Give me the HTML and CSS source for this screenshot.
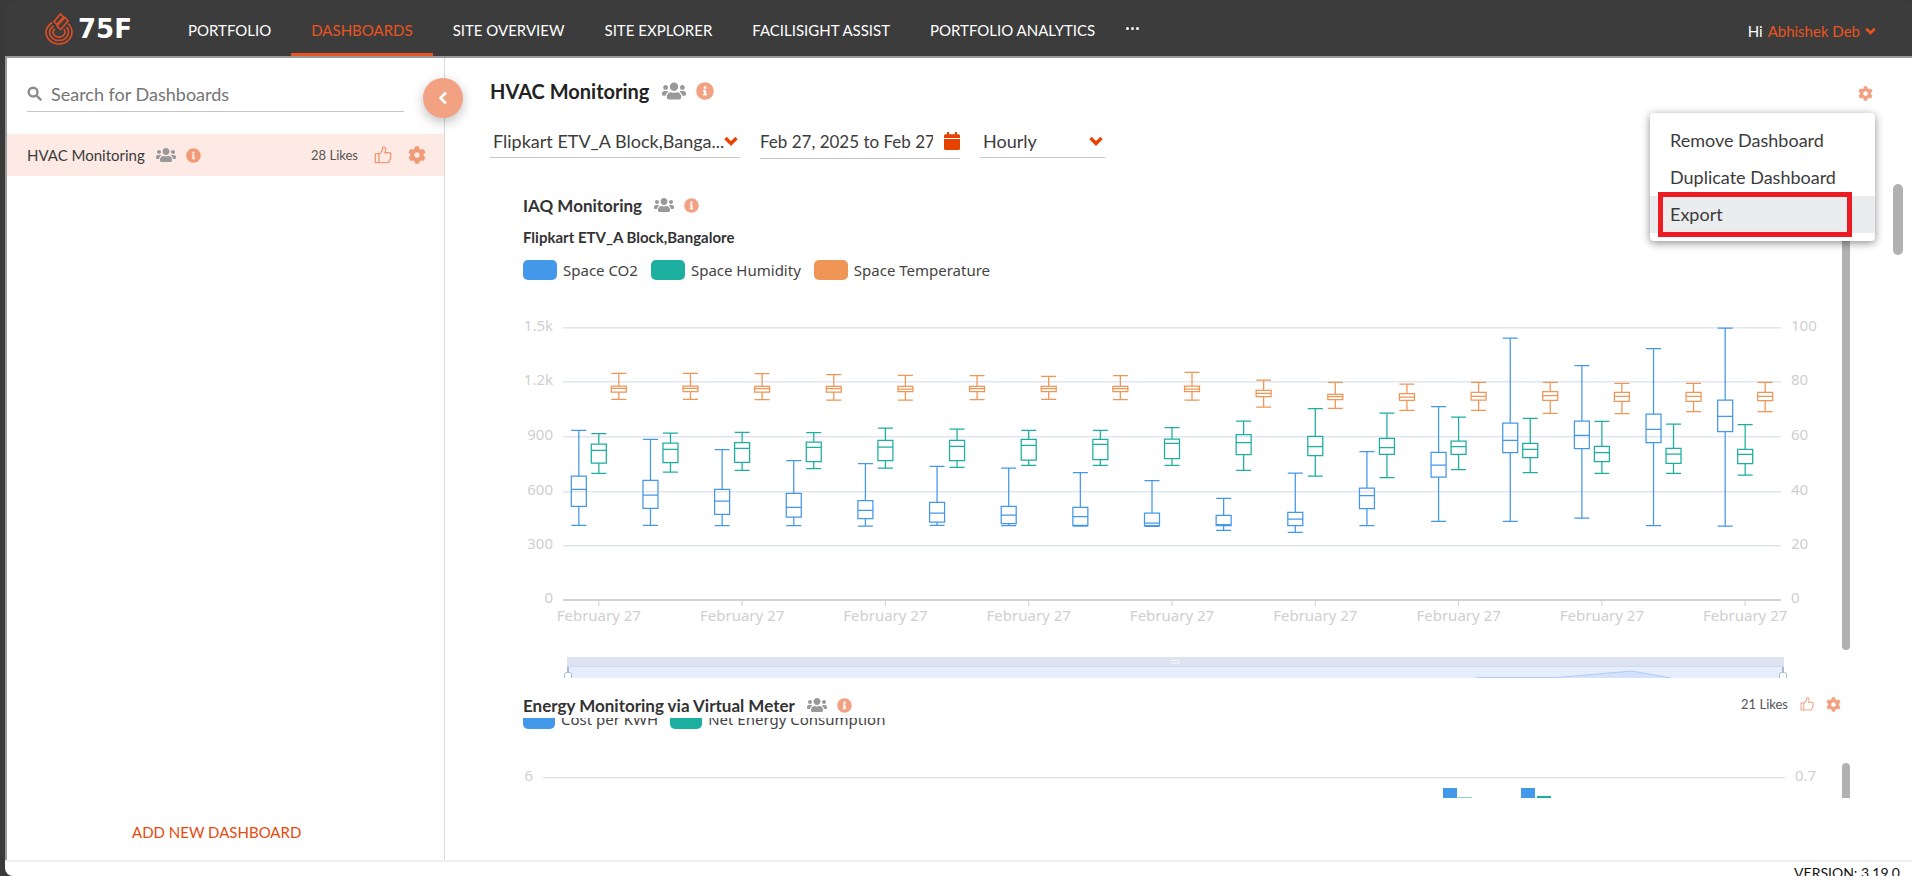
FILE: index.html
```html
<!DOCTYPE html>
<html lang="en">
<head>
<meta charset="utf-8">
<title>75F Dashboards</title>
<link rel="stylesheet" href="styles.css">
</head>
<body>
<svg class="defs" aria-hidden="true">
  <symbol id="i-users" viewBox="0 0 640 512"><path d="M96 224c35.300 0 64-28.700 64-64s-28.700-64-64-64-64 28.700-64 64 28.700 64 64 64zm448 0c35.300 0 64-28.700 64-64s-28.700-64-64-64-64 28.700-64 64 28.700 64 64 64zm32 32h-64c-17.600 0-33.500 7.100-45.100 18.600 40.300 22.100 68.900 62 75.100 109.400h66c17.700 0 32-14.300 32-32v-32c0-35.300-28.700-64-64-64zm-256 0c61.900 0 112-50.100 112-112S381.900 32 320 32 208 82.100 208 144s50.100 112 112 112zm76.800 32h-8.300c-20.800 10-43.900 16-68.500 16s-47.600-6-68.500-16h-8.300C179.600 288 128 339.600 128 403.200V432c0 26.500 21.500 48 48 48h288c26.500 0 48-21.500 48-48v-28.800c0-63.600-51.600-115.200-115.200-115.200zm-223.700-13.400C161.500 263.100 145.600 256 128 256H64c-35.300 0-64 28.700-64 64v32c0 17.700 14.300 32 32 32h65.900c6.300-47.400 34.900-87.300 75.200-109.400z"/></symbol>
  <symbol id="i-info" viewBox="0 0 512 512"><path d="M256 8C119 8 8 119 8 256s111 248 248 248 248-111 248-248S393 8 256 8zm0 110c23.200 0 42 18.800 42 42s-18.800 42-42 42-42-18.800-42-42 18.800-42 42-42zm56 254c0 6.600-5.400 12-12 12h-88c-6.600 0-12-5.400-12-12v-24c0-6.600 5.400-12 12-12h12v-64h-12c-6.600 0-12-5.400-12-12v-24c0-6.600 5.400-12 12-12h64c6.600 0 12 5.400 12 12v100h12c6.600 0 12 5.400 12 12z"/></symbol>
  <symbol id="i-gear" viewBox="0 0 512 512"><path d="M487.400 315.700l-42.600-24.600c4.300-23.200 4.300-47 0-70.200l42.600-24.600c4.900-2.800 7.100-8.600 5.500-14-11.100-35.600-30-67.800-54.700-94.600-3.800-4.100-10-5.100-14.800-2.300L380.800 110c-17.900-15.400-38.500-27.300-60.800-35.100V25.800c0-5.600-3.900-10.500-9.400-11.700-36.700-8.200-74.300-7.800-109.200 0-5.500 1.200-9.400 6.100-9.400 11.700V75c-22.200 7.900-42.800 19.800-60.800 35.100L88.700 85.500c-4.900-2.800-11-1.900-14.800 2.300-24.700 26.700-43.600 58.900-54.700 94.600-1.700 5.400.6 11.200 5.500 14L67.300 221c-4.300 23.200-4.300 47 0 70.200l-42.600 24.600c-4.900 2.800-7.100 8.600-5.500 14 11.100 35.600 30 67.800 54.700 94.600 3.800 4.100 10 5.100 14.800 2.300l42.600-24.600c17.900 15.400 38.500 27.300 60.800 35.100v49.200c0 5.600 3.900 10.500 9.400 11.700 36.700 8.200 74.300 7.800 109.200 0 5.500-1.200 9.400-6.100 9.400-11.700v-49.200c22.200-7.900 42.800-19.800 60.800-35.100l42.600 24.600c4.900 2.800 11 1.900 14.800-2.300 24.700-26.700 43.600-58.900 54.700-94.600 1.500-5.500-.7-11.300-5.600-14.100zM256 336c-44.100 0-80-35.900-80-80s35.900-80 80-80 80 35.900 80 80-35.900 80-80 80z"/></symbol>
  <symbol id="i-thumb" viewBox="0 0 20 20"><path d="M1.500 8.500h4v10h-4zM5.500 9c2.500-1.500 4-3.500 4.200-7.300.1-1 3.300-.9 3.300 2 0 1.500-.5 2.500-1 3.800h5c2 0 2 2 1.300 3 .8 1 .5 2.300-.3 2.800.4 1 .1 2.100-.8 2.600 0 1.700-.8 2.600-2.400 2.600H5.500z" fill="none" stroke="currentColor" stroke-width="1.500" stroke-linejoin="round"/></symbol>
  <symbol id="i-search" viewBox="0 0 16 16"><path d="M6.500 1.800a4.700 4.700 0 1 0 0 9.400 4.700 4.700 0 0 0 0-9.400zM10 10l4.500 4.500" fill="none" stroke="currentColor" stroke-width="2.600" stroke-linecap="round"/></symbol>
  <symbol id="i-down" viewBox="0 0 14 10"><path d="M1.500 2L7 7.500 12.500 2" fill="none" stroke="currentColor" stroke-width="3.400"/></symbol>
  <symbol id="i-left" viewBox="0 0 10 14"><path d="M8 1.500L2.500 7 8 12.500" fill="none" stroke="currentColor" stroke-width="2.600"/></symbol>
  <symbol id="i-cal" viewBox="0 0 16 18"><path d="M0 7h16v9.500a1.500 1.500 0 0 1-1.500 1.500h-13A1.500 1.500 0 0 1 0 16.500zM0 6V3.700a1.500 1.500 0 0 1 1.500-1.500H3V.5a.5.500 0 0 1 .5-.5h1.200a.5.500 0 0 1 .5.500v1.700h5.600V.5a.5.500 0 0 1 .5-.5h1.200a.5.500 0 0 1 .5.500v1.700h1.500A1.500 1.500 0 0 1 16 3.700V6z"/></symbol>
  <symbol id="i-drop" viewBox="0 0 28 33"><g fill="none" stroke="currentColor" stroke-width="1.700"><path d="M7 10.500C3.500 13.500 1 16 1 20a13 12 0 0 0 26 0c0-3.500-1.500-6-4-8.500M8.500 14C6 16 4.500 17.500 4.500 20a9.500 8.500 0 0 0 19 0c0-2-.8-3.800-2-5M10 17c-1.400 1-2 2-2 3a6 5.200 0 0 0 12 0c0-1-.4-2-1.200-3"/><path d="M9 9.500L15.500 2l3 3-6.500 7.500zM12 14l8-8.500L23 9l-7.500 8.500L12 14z"/></g></symbol>
</svg>

<div class="app">
  <header class="topbar">
    <a class="logo" href="#" aria-label="75F"><svg class="drop"><use href="#i-drop"/></svg><span class="logo-name">75F</span></a>
    <nav class="nav">
      <a href="#">PORTFOLIO</a>
      <a href="#" class="active">DASHBOARDS</a>
      <a href="#">SITE OVERVIEW</a>
      <a href="#">SITE EXPLORER</a>
      <a href="#">FACILISIGHT ASSIST</a>
      <a href="#">PORTFOLIO ANALYTICS</a>
    </nav>
    <button class="more" aria-label="More"><i></i><i></i><i></i></button>
    <div class="greeting">Hi <button class="user">Abhishek Deb <svg class="user-arrow"><use href="#i-down"/></svg></button></div>
  </header>

  <div class="body">
    <aside class="sidebar">
      <label class="search"><svg><use href="#i-search"/></svg><input type="text" placeholder="Search for Dashboards" aria-label="Search for Dashboards"></label>
      <button class="collapse" aria-label="Collapse"><svg><use href="#i-left"/></svg></button>
      <div class="dash-row">
        <a href="#" class="dash-name">HVAC Monitoring</a>
        <svg class="users"><use href="#i-users"/></svg>
        <svg class="info"><use href="#i-info"/></svg>
        <span class="likes">28 Likes</span>
        <button class="icon" aria-label="Like"><svg class="thumb"><use href="#i-thumb"/></svg></button>
        <button class="icon" aria-label="Settings"><svg class="gear"><use href="#i-gear"/></svg></button>
      </div>
      <button class="add">ADD NEW DASHBOARD</button>
    </aside>

    <main class="main">
      <div class="title-row">
        <h1>HVAC Monitoring</h1>
        <svg class="users large"><use href="#i-users"/></svg>
        <svg class="info large"><use href="#i-info"/></svg>
        <div class="settings">
          <button class="icon" aria-label="Dashboard settings"><svg class="gear small"><use href="#i-gear"/></svg></button>
          <div class="menu">
            <button>Remove Dashboard</button>
            <button>Duplicate Dashboard</button>
            <button class="hover">Export<span class="mark"></span></button>
          </div>
        </div>
      </div>

      <div class="filters">
        <div class="field site"><select aria-label="Site"><option>Flipkart ETV_A Block,Banga...</option></select><svg class="arrow"><use href="#i-down"/></svg></div>
        <div class="field date"><input type="text" aria-label="Date range" value="Feb 27, 2025 to Feb 27, 2025"><svg class="cal"><use href="#i-cal"/></svg></div>
        <div class="field interval"><select aria-label="Interval"><option>Hourly</option></select><svg class="arrow"><use href="#i-down"/></svg></div>
      </div>

      <div class="scroll">
        <div class="widgets">
          <section class="widget">
            <div class="widget-content">
              <div class="widget-head"><h2>IAQ Monitoring</h2><svg class="users"><use href="#i-users"/></svg><svg class="info"><use href="#i-info"/></svg></div>
              <h3>Flipkart ETV_A Block,Bangalore</h3>
              <ul class="legend"><li class="blue">Space CO2</li><li class="green">Space Humidity</li><li class="orange">Space Temperature</li></ul>
              <svg class="chart" id="iaq"></svg>
            </div>
            <div class="track"><span class="thumb-bar first"></span></div>
          </section>
          <section class="widget">
            <div class="widget-content">
              <div class="widget-head energy-head"><h2>Energy Monitoring via Virtual Meter</h2><svg class="users"><use href="#i-users"/></svg><svg class="info"><use href="#i-info"/></svg></div>
              <div class="energy-view">
                <ul class="legend compact"><li class="blue">Cost per KWH</li><li class="green">Net Energy Consumption</li></ul>
                <svg class="chart energy" id="energy"></svg>
              </div>
            </div>
            <div class="track">
              <div class="actions"><span class="likes">21 Likes</span><button class="icon" aria-label="Like"><svg class="thumb small"><use href="#i-thumb"/></svg></button><button class="icon" aria-label="Settings"><svg class="gear small"><use href="#i-gear"/></svg></button></div>
              <span class="thumb-bar second"></span>
            </div>
          </section>
        </div>
        <div class="page-track"><span></span></div>
      </div>
    </main>
  </div>
  <footer class="footer">VERSION: 3.19.0</footer>
</div>
<script src="charts.js"></script>
</body>
</html>
```
FILE: styles.css
```css
* { box-sizing: border-box; }
body { margin: 0; background: #3a3a3a; color: #3c3c3c; font-family: Lato, "Liberation Sans", sans-serif; overflow: hidden; }
button, input, select { font: inherit; color: inherit; background: none; border: 0; padding: 0; margin: 0; outline: 0; }
a { color: inherit; text-decoration: none; }
svg { display: block; flex: none; fill: currentColor; }
h1, h2, h3, ul { margin: 0; padding: 0; }
.defs { position: absolute; width: 0; height: 0; }

.app { display: flex; flex-direction: column; height: 100vh; padding-left: 5px; }
.topbar { flex: none; display: flex; align-items: center; height: 57px; margin-top: 1px; background: #3c3c3c; border-bottom: 2px solid #999; border-radius: 10px 10px 0 0; color: #fff; font-size: 15px; }
.logo { display: flex; align-items: center; gap: 5px; width: 123px; margin-left: 40px; }
.drop { width: 28px; height: 33px; color: #d94e26; }
.logo-name { font: bold 26px/30px "DejaVu Sans", sans-serif; }
.nav { display: flex; align-self: stretch; }
.nav a { display: flex; align-items: center; padding: 6px 20px 0; border-bottom: 3px solid transparent; }
.nav a.active { color: #e95420; border-color: #e95420; }
.more { display: flex; gap: 2px; margin-left: 11px; }
.more i { width: 3px; height: 3px; border-radius: 2px; background: #fff; }
.greeting { display: flex; gap: 5px; margin: 4px 36px 0 auto; }
.user { display: flex; align-items: center; gap: 5px; color: #e95420; }
.user-arrow { width: 11px; height: 8px; }

.body { flex: 1; display: flex; min-height: 0; background: #fff; border-left: 2px solid #999; }
.sidebar { position: relative; z-index: 1; flex: none; display: flex; flex-direction: column; width: 438px; padding-top: 18px; border-right: 1px solid #d9d9d9; }
.search { display: flex; align-items: center; gap: 9px; height: 36px; margin: 0 40px 22px 20px; border-bottom: 1px solid #c6c6c6; color: #8e8e8e; }
.search svg { width: 15px; height: 15px; }
.search input { flex: 1; min-width: 0; font-size: 18px; color: #666; }
.search input::placeholder { color: #757575; }
.collapse { position: absolute; right: -19px; top: 20px; display: flex; align-items: center; justify-content: center; width: 40px; height: 40px; border-radius: 50%; background: #f2a283; color: #fff; box-shadow: 0 4px 12px rgba(0, 0, 0, .25); }
.collapse svg { width: 10px; height: 14px; }
.dash-row { display: flex; align-items: center; height: 42px; padding: 0 18px 0 20px; background: #fdeae4; font-size: 15px; }
.dash-name { margin-right: 11px; }
.users { width: 20px; height: 16px; color: #999; margin-right: 10px; }
.info { width: 15px; height: 15px; color: #f19a76; }
.users.large { width: 24px; height: 20px; }
.info.large { width: 18px; height: 18px; color: #f2a283; }
.likes { margin-left: auto; font-size: 13px; color: #555; white-space: nowrap; }
.icon { color: #f19a76; margin-left: 16px; }
.thumb, .gear { width: 18px; height: 18px; }
.thumb.small { width: 14px; height: 14px; }
.gear.small { width: 15px; height: 15px; }
.add { margin: auto auto 18px 125px; font-size: 15px; line-height: 20px; color: #e64a0e; }

.main { flex: 1; display: flex; flex-direction: column; min-width: 0; padding-left: 45px; }
.title-row { flex: none; display: flex; align-items: center; height: 32px; margin-top: 17px; }
h1 { margin-right: 13px; font-size: 20px; color: #222; }
.settings { position: relative; margin: 4px 39px 0 auto; }
.settings .icon { display: block; margin: 0; color: #f2a283; }
.menu { position: absolute; z-index: 2; right: -2px; top: 27px; width: 225px; padding: 9px 0 8px; background: #fff; border-radius: 4px; box-shadow: 0 2px 8px rgba(0, 0, 0, .45); }
.menu button { position: relative; display: block; width: 100%; height: 37px; padding: 0 20px; text-align: left; font-size: 18px; }
.menu .hover { background: #ebecee; }
.mark { position: absolute; inset: -4px 23px -4px 8px; border: 5px solid #ed1c24; }

.filters { flex: none; display: flex; align-items: flex-start; gap: 20px; margin-top: 17px; font-size: 18px; }
.field { display: flex; align-items: center; height: 34px; border-bottom: 1px solid #c6c6c6; }
.field select, .field input { flex: 1; min-width: 0; height: 30px; appearance: none; padding-left: 3px; }
.field .arrow { width: 14px; height: 10px; color: #e64200; margin-right: 2px; }
.site { width: 250px; }
.date { width: 200px; height: 35px; gap: 11px; }
.field.date input { padding: 0; font-size: 17px; }
.cal { width: 16px; height: 18px; color: #e64200; }
.interval { width: 125px; }

.scroll { flex: 1; display: flex; min-height: 0; margin-top: 25px; padding-left: 33px; }
.widgets { flex: 1; min-width: 0; }
.widget { display: flex; }
.widget-content { flex: 1; min-width: 0; }
.widget-head { display: flex; align-items: center; height: 42px; }
h2 { margin-right: 12px; font-size: 17px; color: #333; }
.widget-head .info { color: #f2a283; }
h3 { height: 34px; line-height: 22px; font-size: 15px; color: #333; }
.legend { display: flex; gap: 13px; list-style: none; font: 15px/20px "Noto Sans", sans-serif; color: #444; }
.legend li { display: flex; align-items: center; gap: 6px; }
.legend li::before { content: ""; width: 34px; height: 20px; border-radius: 5px; background: currentColor; }
.legend .blue::before { background: #4498ea; }
.legend .green::before { background: #1cae9f; }
.legend .orange::before { background: #ef9555; }
.chart { width: 100%; height: 398px; font: 15px "Noto Sans", sans-serif; }
.track { position: relative; flex: none; width: 8px; }
.thumb-bar { position: absolute; right: 0; width: 8px; background: #b1b1b1; border-radius: 4px; }
.thumb-bar.first { top: 0; bottom: 28px; }
.thumb-bar.second { top: 85px; bottom: 0; border-radius: 4px 4px 0 0; }
.energy-head { height: 40px; padding-top: 14px; }
.energy-view { height: 80px; overflow: hidden; }
.legend.compact { gap: 12px; margin-top: -9px; }
.compact li::before { width: 32px; }
.chart.energy { height: 69px; }
.actions { position: absolute; right: 9px; top: 18px; display: flex; align-items: center; }
.actions .icon { margin-left: 12px; color: #f2a283; }
.page-track { width: 19px; margin: 0 0 0 43px; }
.page-track span { display: block; width: 10px; height: 71px; border-radius: 5px; background: #b1b1b1; }

.footer { flex: none; height: 16px; padding: 1px 12px 0; background: #fff; border-top: 2px solid #eee; border-radius: 0 0 0 8px; text-align: right; font-size: 14px; line-height: 20px; color: #111; white-space: nowrap; }
```
FILE: charts.js
```js
const NS = 'http://www.w3.org/2000/svg';

// Each box: high whisker, upper quartile, median, lower quartile, low whisker,
// as distances below the top of the chart in thirds of a pixel.
const series = [
  { color: '#4498ea', shift: -20, boxes: [
    [391,528,568,619,676],[418,541,585,625,676],[449,568,603,643,677],[482,580,622,651,677],[491,602,631,656,678],[499,607,639,666,676],
    [504,619,645,671,677],[518,622,650,676,678],[542,639,669,677,679],[595,646,674,677,691],[519,637,657,677,697],[455,564,587,626,677],
    [320,457,495,531,664],[114,369,421,458,664],[197,363,406,446,654],[146,342,388,428,677],[84,300,349,395,678]] },
  { color: '#1cae9f', shift: 0, boxes: [
    [401,432,451,489,520],[399,429,448,488,516],[397,428,445,487,511],[398,426,442,485,506],[384,421,441,482,504],[387,421,439,482,502],
    [391,418,436,480,496],[391,418,433,479,496],[383,417,430,476,496],[363,404,428,464,511],[326,409,440,467,528],[339,415,443,463,533],
    [351,423,440,463,509],[355,430,448,473,518],[364,439,458,485,520],[372,445,462,490,520],[374,448,463,491,525]] },
  { color: '#ef9555', shift: 20, boxes: [
    [220,258,265,276,298],[220,258,265,275,298],[221,259,266,276,299],[224,259,266,276,300],[226,259,267,275,300],[227,259,266,275,299],
    [229,259,266,275,298],[227,259,266,275,299],[217,258,267,275,300],[240,271,280,290,321],[247,283,290,299,325],[252,281,291,301,331],
    [247,277,289,300,331],[247,275,287,301,340],[250,277,289,304,341],[250,277,289,304,335],[247,277,289,302,335]] }
];

function add(parent, name, attrs, text) {
  const el = document.createElementNS(NS, name);
  for (const key in attrs) el.setAttribute(key, attrs[key]);
  if (text !== undefined) el.textContent = text;
  parent.appendChild(el);
}

function label(svg, x, y, anchor, text) {
  add(svg, 'text', { x, y, 'text-anchor': anchor, fill: '#cfcfcf' }, text);
}

function drawIaq() {
  const svg = document.getElementById('iaq');
  const width = svg.getBoundingClientRect().width;
  const left = 40, right = width - 61, top = 20;
  svg.replaceChildren();

  const leftLabels = ['1.5k', '1.2k', '900', '600', '300', '0'];
  const rightLabels = ['100', '80', '60', '40', '20', '0'];
  const lines = [47, 101, 156, 211, 265, 319];
  lines.forEach((y, i) => {
    const axis = i === 5;
    add(svg, 'rect', { x: left, y: y, width: right - left, height: axis ? 2 : 1.5, fill: axis ? '#d2d2d2' : '#e0e6f1' });
    label(svg, left - 10, y + 4, 'end', leftLabels[i]);
    label(svg, right + 10, y + 4, 'start', rightLabels[i]);
  });

  const step = (right - left) / 17;
  for (let i = 0; i < 17; i += 2) {
    const x = left + step * (i + 0.5);
    add(svg, 'path', { d: `M${x} 320v6`, stroke: '#cfcfcf' });
    label(svg, x, 341, 'middle', 'February 27');
  }

  for (const { color, shift, boxes } of series) {
    boxes.forEach((box, i) => {
      const x = left + step * (i + 0.5) + shift;
      const [hi, q3, med, q1, lo] = box.map(v => v / 3 + top);
      const a = x - 7.5, b = x + 7.5;
      add(svg, 'path', {
        d: `M${a} ${hi}H${b}M${x} ${hi}V${q3}M${a} ${q3}H${b}V${q1}H${a}ZM${a} ${med}H${b}M${x} ${q1}V${lo}M${a} ${lo}H${b}`,
        fill: 'none', stroke: color, 'stroke-width': 1.25
      });
    });
  }

  const s0 = left + 4, s1 = right + 3, mid = (s0 + s1) / 2;
  add(svg, 'rect', { x: s0, y: 377, width: s1 - s0, height: 21, fill: '#e6edfc' });
  add(svg, 'rect', { x: s0, y: 377, width: s1 - s0, height: 10, fill: '#dde3f0' });
  add(svg, 'path', { d: `M${s0} 386.500H${s1}`, stroke: '#d0daec' });
  add(svg, 'path', { d: `M${mid - 4} 380.500h8M${mid - 4} 383h8`, stroke: '#fff', 'stroke-dasharray': '2 1' });
  add(svg, 'path', { d: `M${s1 - 307} 397.500h80l75-6.500 39 7`, fill: '#d4e1fb', stroke: '#b3cafa' });
  for (const x of [s0 + 1, s1 - 1]) {
    add(svg, 'path', { d: `M${x} 387v7`, stroke: '#acb8d1', 'stroke-width': 2 });
    add(svg, 'rect', { x: x - 3.5, y: 392.5, width: 7, height: 12, rx: 2, fill: '#fff', stroke: '#acb8d1' });
  }
}

function drawEnergy() {
  const svg = document.getElementById('energy');
  const width = svg.getBoundingClientRect().width;
  svg.replaceChildren();
  add(svg, 'rect', { x: 20, y: 48, width: width - 77, height: 1.5, fill: '#e0e6f1' });
  label(svg, 10, 52, 'end', '6');
  label(svg, width - 47, 52, 'start', '0.7');
  for (const [x, y, color] of [[399, 59, '#4498ea'], [384, 68, '#8fd2ca'], [321, 59, '#4498ea'], [305, 67, '#1cae9f']]) {
    add(svg, 'rect', { x: width - x, y, width: 14, height: 20, fill: color });
  }
}

function draw() { drawIaq(); drawEnergy(); }
window.addEventListener('resize', draw);
draw();
```
